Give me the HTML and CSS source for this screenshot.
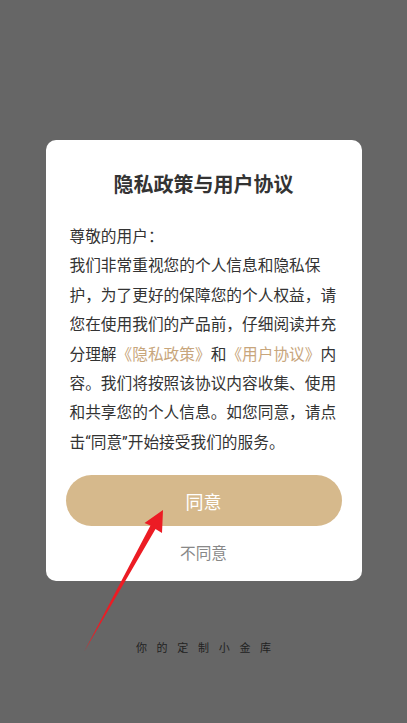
FILE: index.html
```html
<!DOCTYPE html>
<html lang="zh-CN">
<head>
<meta charset="utf-8">
<title>隐私政策与用户协议</title>
<link rel="stylesheet" href="styles.css">
</head>
<body>
<div class="screen">
  <div class="dialog">
    <h1 class="title">隐私政策与用户协议</h1>
    <p class="content">尊敬的用户：<br>我们非常重视您的个人信息和隐私保护，为了更好的保障您的个人权益，请您在使用我们的产品前，仔细阅读并充分理解<span class="link">《隐私政策》</span>和<span class="link">《用户协议》</span>内容。我们将按照该协议内容收集、使用和共享您的个人信息。如您同意，请点击“同意”开始接受我们的服务。</p>
    <button class="btn-agree">同意</button>
    <div class="btn-disagree">不同意</div>
  </div>
  <div class="slogan">你的定制小金库</div>
  <svg class="arrow" width="407" height="723" viewBox="0 0 407 723">
    <polygon points="163,510 162,533 155.5,529 84,652 150.5,525.5 144.5,523" fill="#ec1c24"/>
  </svg>
</div>
</body>
</html>
```
FILE: styles.css
```css
* { box-sizing: border-box; }
html, body {
  margin: 0;
  padding: 0;
  background: #666666;
}
.screen {
  position: relative;
  width: 407px;
  height: 723px;
  display: flex;
  flex-direction: column;
  align-items: center;
  padding-top: 140px;
  font-family: Roboto, "Noto Sans CJK SC", sans-serif;
  overflow: hidden;
}
.dialog {
  width: 316px;
  background: #ffffff;
  border-radius: 10px;
  padding: 31px 24px 13px;
  display: flex;
  flex-direction: column;
  align-items: stretch;
}
.title {
  margin: 0;
  font-size: 20px;
  line-height: 28px;
  font-weight: 700;
  color: #333333;
  text-align: center;
}
.content {
  margin: 23px 0 0;
  font-size: 15.7px;
  line-height: 29.4px;
  color: #333333;
  text-align: left;
}
.link {
  color: #c8a67c;
}
.btn-agree {
  margin: 18px -4px 0;
  height: 51px;
  border: none;
  border-radius: 26px;
  background: #d6b98c;
  color: #ffffff;
  font-family: inherit;
  font-size: 18px;
  padding: 0;
}
.btn-disagree {
  margin-top: 14px;
  font-size: 15.7px;
  line-height: 28px;
  color: #888888;
  text-align: center;
}
.slogan {
  margin-top: 60px;
  font-size: 11px;
  line-height: 16px;
  letter-spacing: 9.7px;
  padding-left: 9.7px;
  color: #222222;
}
.arrow {
  position: absolute;
  left: 0;
  top: 0;
  pointer-events: none;
}
```
